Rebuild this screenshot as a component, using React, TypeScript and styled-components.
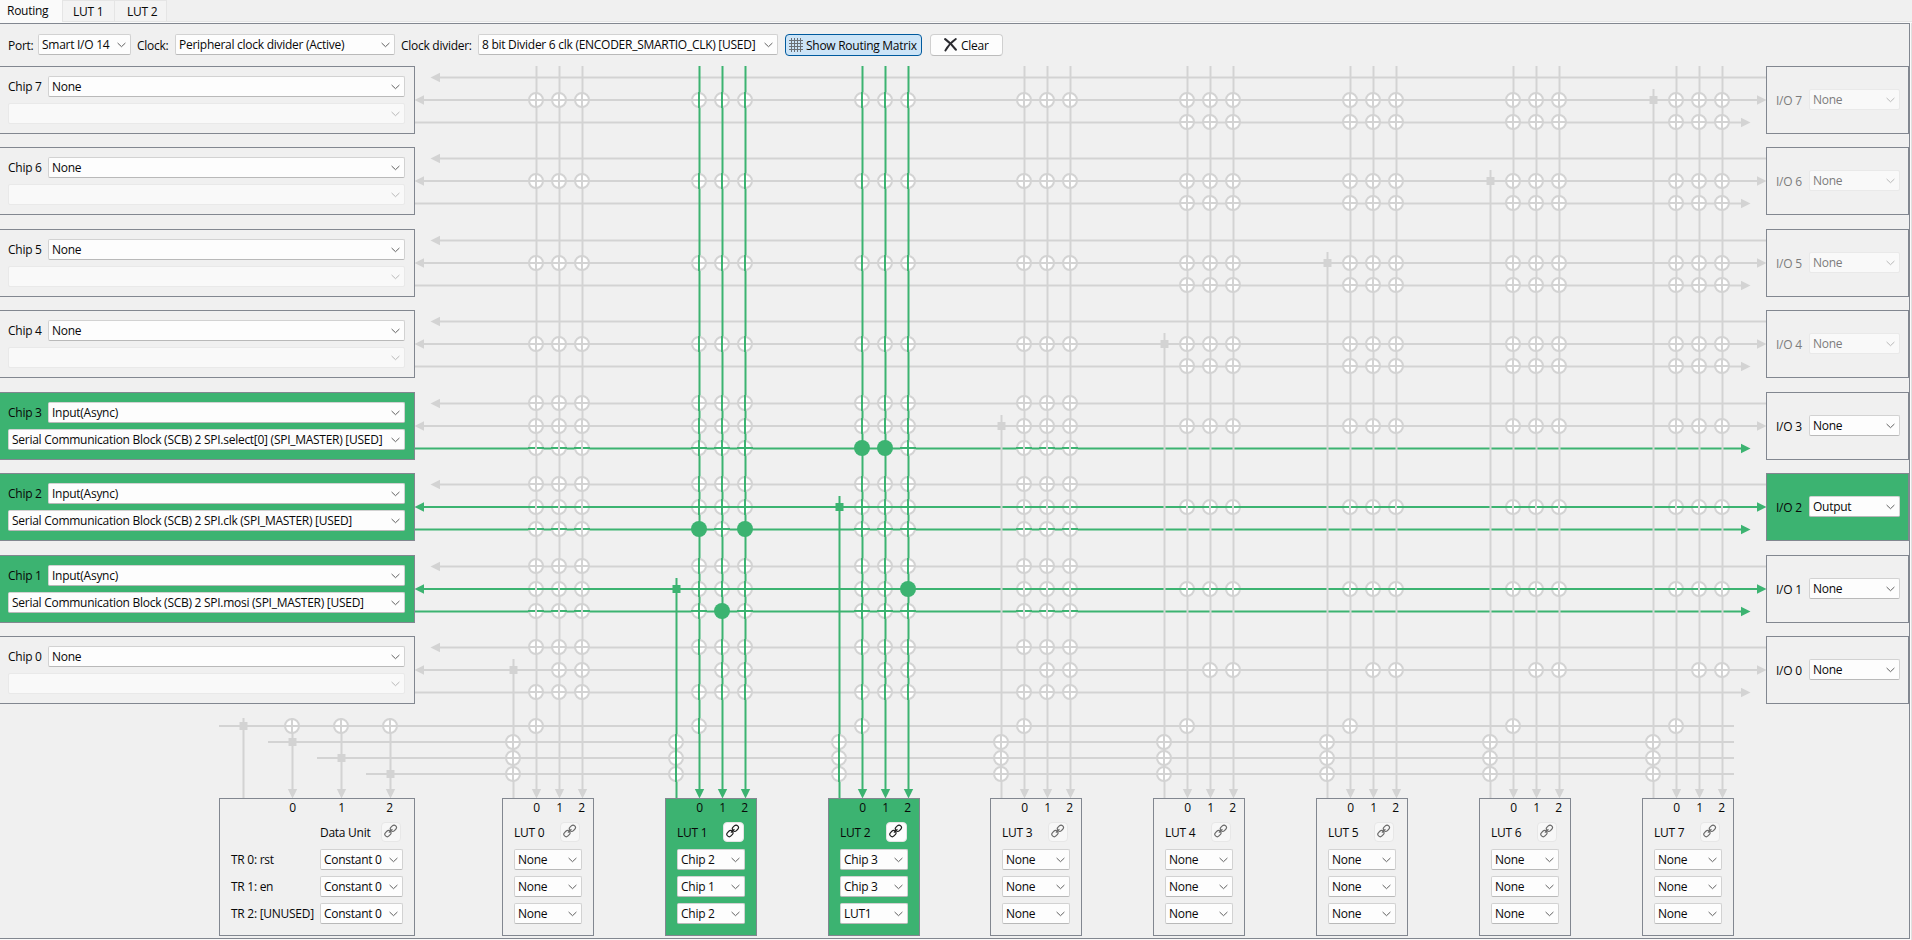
import React from "react";
import styled, { createGlobalStyle, css } from "styled-components";

const GREEN = "#3cb371";
const GRAY = "#d3d3d3";
const FRAME = "#828790";

const GlobalStyle = createGlobalStyle`
  * { box-sizing: border-box; }
  html, body { margin: 0; padding: 0; background: #f0f0f0; overflow: hidden; }
  body {
    font-family: "Open Sans", "Noto Sans", sans-serif;
    font-size: 12px;
    line-height: 16px;
    letter-spacing: -0.27px;
    color: #080808;
  }
`;

const Window = styled.div`
  width: 1912px;
  height: 940px;
  display: flex;
  flex-direction: column;
  background: #f0f0f0;
  white-space: nowrap;
`;

const TabBar = styled.div`
  display: flex;
  height: 23px;
  border-bottom: 1px solid #fafafa;
  align-items: flex-start;
`;

const Tab = styled.div<{ $w: number; $active?: boolean; $pad?: number }>`
  width: ${(p) => p.$w}px;
  height: ${(p) => (p.$active ? 23 : 22)}px;
  flex: none;
  text-align: left;
  padding: ${(p) => (p.$active ? 3 : 3)}px 0 0 ${(p) => p.$pad ?? 7}px;
  background: ${(p) => (p.$active ? "#fafafa" : "#f3f3f3")};
  border: solid #e5e5e5;
  border-width: ${(p) => (p.$active ? "0" : "1px 0 1px 1px")};
`;

const TabFill = styled.div`
  flex: 1;
  height: 22px;
  border: solid #e5e5e5;
  border-width: 0 0 1px 1px;
`;

const Body = styled.div`
  display: flex;
  height: 917px;
  border-right: 1px solid #e0e0e0;
  background: #fafafa;
  padding: 0 1px 1px 0;
`;

const Page = styled.div`
  flex: 1;
  display: flex;
  flex-direction: column;
  border: solid ${FRAME};
  border-width: 1px 1px 1px 0;
  background: #f0f0f0;
`;

const Toolbar = styled.div`
  display: flex;
  align-items: flex-start;
  height: 42px;
  padding: 10px 0 0 8px;
`;

const ToolLabel = styled.span<{ $w: number; $pad?: number }>`
  width: ${(p) => p.$w}px;
  padding: 4px 0 0 ${(p) => p.$pad ?? 0}px;
`;

const ToolButton = styled.div<{ $w: number; $on?: boolean }>`
  display: flex;
  align-items: center;
  width: ${(p) => p.$w}px;
  height: 22px;
  margin-left: ${(p) => (p.$on ? 7 : 8)}px;
  border-radius: 4px;
  border: 1px solid ${(p) => (p.$on ? "#005a9e" : "#d0d0d0")};
  ${(p) => !p.$on && css`border-bottom-color: #bcbcbc;`}
  background: ${(p) => (p.$on ? "#cce4f7" : "#fdfdfd")};
  padding-left: ${(p) => (p.$on ? 3 : 13)}px;
  gap: ${(p) => (p.$on ? 3 : 4)}px;
  > span { padding-top: 1px; }
  > svg { margin-top: -1px; }
`;

const ComboBox = styled.div<{ $w?: number; $disabled?: boolean }>`
  display: flex;
  align-items: center;
  justify-content: space-between;
  ${(p) => (p.$w ? css`width: ${p.$w}px; flex: none;` : css`flex: 1;`)}
  height: 21px;
  padding: 1px 4px 0 3px;
  border-radius: 2px;
  border: 1px solid ${(p) => (p.$disabled ? "#e9e9e9" : "#d2d2d2")};
  border-bottom-color: ${(p) => (p.$disabled ? "#e9e9e9" : "#b9b9b9")};
  background: ${(p) => (p.$disabled ? "#f9f9f9" : "#fdfdfd")};
  color: ${(p) => (p.$disabled ? "#7c7c7c" : "#080808")};
`;

const Chevron = ({ off }: { off?: boolean }) => (
  <svg width="9" height="6" viewBox="0 0 9 6" fill="none">
    <path d="M0.6 1 L4.5 4.7 L8.4 1" stroke={off ? "#b8b8b8" : "#606060"} strokeWidth="1" />
  </svg>
);

const Combo = ({ text = "", w, disabled }: { text?: string; w?: number; disabled?: boolean }) => (
  <ComboBox $w={w} $disabled={disabled}>
    <span>{text}</span>
    <Chevron off={disabled} />
  </ComboBox>
);

const Board = styled.div`
  display: grid;
  grid-template-columns: 415px 1351px 143px;
  grid-template-rows: 732px 140px;
`;

const Wires = styled.svg`
  grid-area: 1 / 1 / 3 / 4;
`;

const Column = styled.div<{ $col: number }>`
  grid-area: 1 / ${(p) => p.$col} / 2 / ${(p) => p.$col + 1};
  display: flex;
  flex-direction: column;
  gap: 13px;
`;

const boxFrame = css<{ $on?: boolean }>`
  border: 1px solid ${FRAME};
  background: ${(p) => (p.$on ? GREEN : "#f0f0f0")};
`;

const ChipBox = styled.div<{ $on?: boolean }>`
  ${boxFrame}
  border-left: 0;
  flex: none;
  height: 68px;
  padding: 9px 9px 0 8px;
  display: flex;
  flex-direction: column;
  gap: 6px;
  &:nth-child(even) { margin-bottom: 1px; }
`;

const ChipRow = styled.div`
  display: flex;
  height: 21px;
`;

const ChipLabel = styled.span`
  width: 40px;
  padding-top: 3px;
`;

const IoBox = styled.div<{ $on?: boolean }>`
  ${boxFrame}
  flex: none;
  height: 68px;
  padding: 22px 8px 0 9px;
  display: flex;
  &:nth-child(even) { margin-bottom: 1px; }
`;

const IoLabel = styled.span<{ $disabled?: boolean }>`
  width: 33px;
  padding-top: 4px;
  color: ${(p) => (p.$disabled ? "#7c7c7c" : "#080808")};
`;

const Units = styled.div`
  grid-area: 2 / 1 / 3 / 4;
  display: flex;
  padding-left: 219px;
`;

const DataBox = styled.div`
  ${boxFrame}
  width: 196px;
  height: 138px;
  margin-right: 87px;
`;

const LutBox = styled.div<{ $on?: boolean; $gap: number }>`
  ${boxFrame}
  width: 92px;
  height: 138px;
  margin-right: ${(p) => p.$gap}px;
`;

const Pins = styled.div<{ $left: number; $pitch: number }>`
  display: flex;
  height: 20px;
  padding: 1px 0 0 ${(p) => p.$left}px;
  span {
    width: ${(p) => p.$pitch}px;
    text-align: center;
  }
  span:last-child { margin-left: -1px; }
`;

const UnitHead = styled.div<{ $left: number; $right: number }>`
  display: flex;
  justify-content: space-between;
  height: 24px;
  padding: 3px ${(p) => p.$right}px 0 ${(p) => p.$left}px;
  > span { padding-top: 3px; }
`;

const LinkButton = styled.div<{ $on?: boolean }>`
  width: ${(p) => (p.$on ? 21 : 20)}px;
  margin-right: ${(p) => (p.$on ? -1 : 0)}px;
  height: 20px;
  border-radius: 4px;
  border: 1px solid ${(p) => (p.$on ? "#e4e4e4" : "#e7e7e7")};
  background: ${(p) => (p.$on ? "#fdfdfd" : "#f7f7f7")};
  padding: 1px 0 0 2px;
  line-height: 0;
`;

const UnitRows = styled.div<{ $left: number }>`
  display: flex;
  flex-direction: column;
  gap: 6px;
  padding: 6px 0 0 ${(p) => p.$left}px;
`;

const UnitRow = styled.div`
  display: flex;
  height: 21px;
`;

const UnitLabel = styled.span`
  width: 89px;
  padding-top: 3px;
`;

const LinkIcon = ({ on }: { on?: boolean }) => (
  <svg width="14" height="14" viewBox="0 0 14 14" fill="none" stroke={on ? "#1c1c1c" : "#6a6a6a"} strokeWidth="1.15">
    <rect x="-3.3" y="-2.4" width="6.6" height="4.8" rx="2.4" transform="translate(9.4 4.2) rotate(-45)" />
    <rect x="-3.3" y="-2.4" width="6.6" height="4.8" rx="2.4" transform="translate(3.9 9.6) rotate(-45)" />
    <path d="M4.9 8.6 L8.4 5.1" />
  </svg>
);

const MatrixIcon = () => (
  <svg width="14" height="14" viewBox="0 0 14 14" stroke="#6b7075" strokeWidth="1">
    <path d="M2.5 0V14M5.5 0V14M8.5 0V14M11.5 0V14M0 2.5H14M0 5.5H14M0 8.5H14M0 11.5H14" />
  </svg>
);

const ClearIcon = () => (
  <svg width="13" height="14" viewBox="0 0 13 14" fill="none" stroke="#2b2b30" strokeLinecap="round">
    <path d="M1.2 1.2 C4.5 3.6 9 8 11.8 11.6" strokeWidth="2.2" />
    <path d="M11.8 1 C7.5 4 4 8 1.4 12.4" strokeWidth="1.9" />
  </svg>
);

const rowTops = [636, 555, 473, 392, 310, 229, 147, 66];
const lutLefts = [502, 665, 828, 990, 1153, 1316, 1479, 1642];
const greenLuts = [1, 2];
const triggerYs = [726, 742, 758, 774];
const dataXs = [243.5, 292.5, 341.5, 390.5];

type Level = "top" | "mid" | "bot";
const offsets: Record<Level, number> = { top: 11.5, mid: 34, bot: 56.5 };

const lineColor = (chip: number, level: Level) =>
  (level === "mid" && (chip === 1 || chip === 2)) || (level === "bot" && chip >= 1 && chip <= 3) ? GREEN : GRAY;

const connected = new Set(["3bot2-0", "3bot2-1", "2bot1-0", "2bot1-2", "1bot1-1", "1mid2-2"]);

const Switch = ({ x, y, h, v, on }: { x: number; y: number; h: string; v: string; on?: boolean }) =>
  on ? (
    <circle cx={x} cy={y} r="8" fill={GREEN} />
  ) : (
    <g strokeWidth="2">
      <circle cx={x} cy={y} r="7" fill="#fff" stroke={GRAY} />
      <path d={`M${x - 8} ${y}H${x + 8}`} stroke={h} />
      <path d={`M${x} ${y - 8}V${y + 8}`} stroke={v} />
    </g>
  );

const Joint = ({ x, y, color }: { x: number; y: number; color: string }) => (
  <rect x={x - 4} y={y - 4} width="8" height="8" fill={color} />
);

const RoutingWires = () => {
  const switches: React.ReactNode[] = [];
  rowTops.forEach((top, chip) => {
    lutLefts.forEach((left, lut) => {
      const levels: Level[] =
        chip >= 4 ? (lut < 4 ? ["mid"] : ["mid", "bot"]) : lut < 4 ? ["top", "mid", "bot"] : ["mid"];
      const v = greenLuts.includes(lut) ? GREEN : GRAY;
      levels.forEach((level) => {
        [0, 1, 2].forEach((pin) => {
          if (chip === 0 && level === "mid" && pin === 0) return;
          switches.push(
            <Switch
              key={`${chip}${level}${lut}-${pin}`}
              x={left + 34 + pin * 23}
              y={Math.floor(top + offsets[level])}
              h={lineColor(chip, level)}
              v={v}
              on={connected.has(`${chip}${level}${lut}-${pin}`)}
            />
          );
        });
      });
    });
  });

  return (
    <Wires width="1909" height="872" viewBox="0 66 1909 872" fill="none" strokeWidth="2">
      {rowTops.map((top, chip) => {
        const t = top + offsets.top;
        const m = top + offsets.mid;
        const b = top + offsets.bot;
        const mc = lineColor(chip, "mid");
        const bc = lineColor(chip, "bot");
        return (
          <g key={chip}>
            <path d={`M436 ${t}H1766`} stroke={GRAY} />
            <path d={`M430.5 ${t}L440 ${t - 4.7}V${t + 4.7}Z`} fill={GRAY} />
            <path d={`M420 ${m}H1761`} stroke={mc} />
            <path d={`M414.5 ${m}L424 ${m - 4.7}V${m + 4.7}Z`} fill={mc} />
            <path d={`M1766.5 ${m}L1757 ${m - 4.7}V${m + 4.7}Z`} fill={mc} />
            <path d={`M415 ${b}H1745`} stroke={bc} />
            <path d={`M1750.5 ${b}L1741 ${b - 4.7}V${b + 4.7}Z`} fill={bc} />
          </g>
        );
      })}
      {triggerYs.map((y, i) => (
        <path key={y} d={`M${219 + i * 49} ${y}H1734`} stroke={GRAY} />
      ))}
      {dataXs.map((x, i) => (
        <g key={x}>
          <path d={`M${x} 718V${i ? 792 : 798}`} stroke={GRAY} />
          {i > 0 && <path d={`M${x} 798.5L${x - 4.7} 789H${x + 4.7}Z`} fill={GRAY} />}
          <Joint x={x} y={triggerYs[i]} color={GRAY} />
        </g>
      ))}
      {lutLefts.map((left, lut) => {
        const c = greenLuts.includes(lut) ? GREEN : GRAY;
        const out = left + 11.5;
        const y = rowTops[lut] + 34;
        return (
          <g key={lut}>
            <path d={`M${out} ${y - 11}V798`} stroke={c} />
            <Joint x={out} y={y} color={c} />
            {[0, 1, 2].map((pin) => {
              const x = left + 34.5 + pin * 23;
              return (
                <g key={pin}>
                  <path d={`M${x} 66V792`} stroke={c} />
                  <path d={`M${x} 798.5L${x - 4.7} 789H${x + 4.7}Z`} fill={c} />
                </g>
              );
            })}
          </g>
        );
      })}
      {switches}
      {[292, 341, 390].map((x) => (
        <Switch key={x} x={x} y={726} h={GRAY} v={GRAY} />
      ))}
      {lutLefts.map((left, lut) => {
        const c = greenLuts.includes(lut) ? GREEN : GRAY;
        return (
          <g key={lut}>
            <Switch x={left + 34} y={726} h={GRAY} v={c} />
            {triggerYs.slice(1).map((y) => (
              <Switch key={y} x={left + 11} y={y} h={GRAY} v={c} />
            ))}
          </g>
        );
      })}
    </Wires>
  );
};

const chips = [
  { id: 7 },
  { id: 6 },
  { id: 5 },
  { id: 4 },
  { id: 3, source: "Serial Communication Block (SCB) 2 SPI.select[0] (SPI_MASTER) [USED]" },
  { id: 2, source: "Serial Communication Block (SCB) 2 SPI.clk (SPI_MASTER) [USED]" },
  { id: 1, source: "Serial Communication Block (SCB) 2 SPI.mosi (SPI_MASTER) [USED]" },
  { id: 0 },
];

const none3 = ["None", "None", "None"];
const luts = [
  none3,
  ["Chip 2", "Chip 1", "Chip 2"],
  ["Chip 3", "Chip 3", "LUT1"],
  none3,
  none3,
  none3,
  none3,
  none3,
];

export default function App() {
  return (
    <Window>
      <GlobalStyle />
      <TabBar>
        <Tab $w={62} $active>Routing</Tab>
        <Tab $w={52} $pad={10}>LUT 1</Tab>
        <Tab $w={52} $pad={12}>LUT 2</Tab>
        <TabFill />
      </TabBar>
      <Body>
        <Page>
          <Toolbar>
            <ToolLabel $w={30}>Port:</ToolLabel>
            <Combo w={93} text="Smart I/O 14" />
            <ToolLabel $w={44} $pad={6}>Clock:</ToolLabel>
            <Combo w={220} text="Peripheral clock divider (Active)" />
            <ToolLabel $w={83} $pad={6}>Clock divider:</ToolLabel>
            <Combo w={300} text="8 bit Divider 6 clk (ENCODER_SMARTIO_CLK) [USED]" />
            <ToolButton $w={137} $on>
              <MatrixIcon />
              <span>Show Routing Matrix</span>
            </ToolButton>
            <ToolButton $w={73}>
              <ClearIcon />
              <span>Clear</span>
            </ToolButton>
          </Toolbar>
          <Board>
            <RoutingWires />
            <Column $col={1}>
              {chips.map(({ id, source }) => (
                <ChipBox key={id} $on={!!source}>
                  <ChipRow>
                    <ChipLabel>Chip {id}</ChipLabel>
                    <Combo text={source ? "Input(Async)" : "None"} />
                  </ChipRow>
                  <ChipRow>
                    <Combo text={source} disabled={!source} />
                  </ChipRow>
                </ChipBox>
              ))}
            </Column>
            <Column $col={3}>
              {chips.map(({ id }) => (
                <IoBox key={id} $on={id === 2}>
                  <IoLabel $disabled={id > 3}>I/O {id}</IoLabel>
                  <Combo text={id === 2 ? "Output" : "None"} disabled={id > 3} />
                </IoBox>
              ))}
            </Column>
            <Units>
              <DataBox>
                <Pins $left={48} $pitch={49}>
                  <span>0</span>
                  <span>1</span>
                  <span>2</span>
                </Pins>
                <UnitHead $left={100} $right={13}>
                  <span>Data Unit</span>
                  <LinkButton>
                    <LinkIcon />
                  </LinkButton>
                </UnitHead>
                <UnitRows $left={11}>
                  {["TR 0: rst", "TR 1: en", "TR 2: [UNUSED]"].map((label) => (
                    <UnitRow key={label}>
                      <UnitLabel>{label}</UnitLabel>
                      <Combo w={83} text="Constant 0" />
                    </UnitRow>
                  ))}
                </UnitRows>
              </DataBox>
              {luts.map((inputs, i) => {
                const on = greenLuts.includes(i);
                return (
                  <LutBox key={i} $on={on} $gap={i === 2 ? 70 : 71}>
                    <Pins $left={22} $pitch={23}>
                      <span>0</span>
                      <span>1</span>
                      <span>2</span>
                    </Pins>
                    <UnitHead $left={11} $right={13}>
                      <span>LUT {i}</span>
                      <LinkButton $on={on}>
                        <LinkIcon on={on} />
                      </LinkButton>
                    </UnitHead>
                    <UnitRows $left={11}>
                      {inputs.map((text, k) => (
                        <Combo key={k} w={68} text={text} />
                      ))}
                    </UnitRows>
                  </LutBox>
                );
              })}
            </Units>
          </Board>
        </Page>
      </Body>
    </Window>
  );
}
